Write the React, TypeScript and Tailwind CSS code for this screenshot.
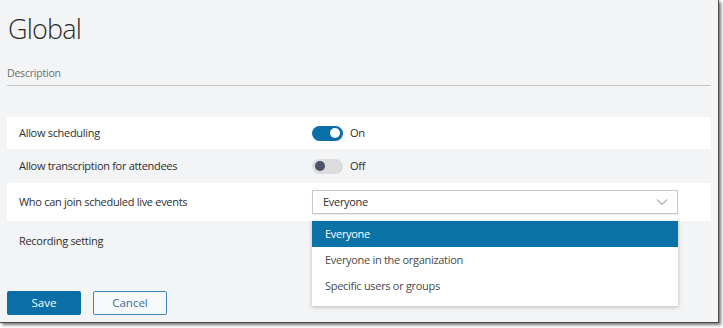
import { useState } from 'react';

const font = { fontFamily: '"Open Sans", "Noto Sans", sans-serif' };

const Toggle = ({ on }: { on: boolean }) => (
  <div className="flex items-center gap-[7px]">
    <div
      className={`w-[31px] h-[15px] rounded-full flex items-center px-[3px] ${
        on ? 'bg-[#0b6fa7] justify-end' : 'bg-[#dcdcdc] justify-start'
      }`}
    >
      <div className={`w-[10px] h-[10px] rounded-full ${on ? 'bg-white' : 'bg-[#4b5166]'}`} />
    </div>
    <span className="text-[11px] tracking-[-0.25px] text-[#2e2e2e]">{on ? 'On' : 'Off'}</span>
  </div>
);

const options = ['Everyone', 'Everyone in the organization', 'Specific users or groups'];

const label = 'w-[305px] pl-[12px] text-[11px] tracking-[-0.3px] text-[#2e2e2e]';

export default function App() {
  const [selected] = useState(0);

  return (
    <div className="w-[723px] h-[328px] bg-white" style={font}>
      <div className="w-[719px] h-[323px] bg-[#f3f4f6] border-r border-b border-[#4a4a4a] shadow-[2px_2px_3px_rgba(0,0,0,0.55)] relative">
        <div className="pl-[7px] pr-[7px]">
          <h1 className="text-[27px] font-light text-[#2b2b2b] leading-[27px] pt-[15px] pl-[1px] tracking-[-0.8px]">Global</h1>
          <div className="mt-[23px] pb-[4px] leading-[16px] border-b border-[#c6c6c6] text-[10.5px] tracking-[-0.2px] text-[#6e6e6e]">Description</div>

          <div className="mt-[31px]">
            <div className="h-[32px] bg-white flex items-center">
              <span className={label}>Allow scheduling</span>
              <Toggle on />
            </div>
            <div className="h-[34px] flex items-center">
              <span className={label}>Allow transcription for attendees</span>
              <Toggle on={false} />
            </div>
            <div className="h-[38px] bg-white flex items-center">
              <span className={label}>Who can join scheduled live events</span>
              <div className="relative">
                <div className="w-[366px] h-[24px] border border-[#c8c8c8] bg-white flex items-center justify-between pl-[10px] pr-[9px] text-[11px] tracking-[-0.3px] text-[#2e2e2e] shadow-[0_1px_1px_rgba(0,0,0,0.08)]">
                  <span>Everyone</span>
                  <svg width="12" height="8" viewBox="0 0 12 8" fill="none">
                    <path d="M1 1.5 L6 6.5 L11 1.5" stroke="#7a7a7a" strokeWidth="1" />
                  </svg>
                </div>
                <div className="absolute left-0 top-[31px] w-[366px] bg-white shadow-[0_1px_4px_rgba(0,0,0,0.25)] z-10 pb-[7px]">
                  {options.map((o, i) => (
                    <div
                      key={o}
                      className={`h-[26px] flex items-center pl-[13px] text-[11px] tracking-[-0.3px] ${
                        i === selected ? 'bg-[#0b72a8] text-white' : 'text-[#4a4a4a]'
                      }`}
                    >
                      {o}
                    </div>
                  ))}
                </div>
              </div>
            </div>
            <div className="h-[40px] flex items-center">
              <span className={label}>Recording setting</span>
            </div>
          </div>

          <div className="mt-[30px] flex gap-[12px]">
            <button className="w-[74px] h-[24px] rounded-[2px] bg-[#0b6fa7] text-white text-[11.5px] leading-none">Save</button>
            <button className="w-[74px] h-[24px] rounded-[2px] border border-[#3f86b8] bg-[#f7f8fa] text-[#3a6f96] text-[11.5px] leading-none">Cancel</button>
          </div>
        </div>
      </div>
    </div>
  );
}
